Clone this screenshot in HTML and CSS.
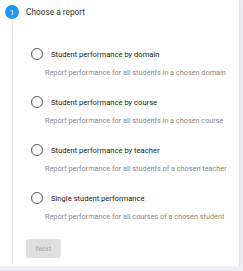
FILE: index.html
```html
<!DOCTYPE html>
<html lang="en">
<head>
    <meta charset="UTF-8">
    <title>Choose a report</title>
    <link rel="stylesheet" href="styles.css">
</head>
<body>

<div class="card">
    <div class="step-head">
        <span class="step-num">1</span>
        <span class="step-title">Choose a report</span>
    </div>
    <div class="step-body">
        <div class="options">
            <div class="option">
                <label class="radio-row"><span class="radio"></span>Student performance by domain</label>
                <p class="hint">Report performance for all students in a chosen domain</p>
            </div>
            <div class="option">
                <label class="radio-row"><span class="radio"></span>Student performance by course</label>
                <p class="hint">Report performance for all students in a chosen course</p>
            </div>
            <div class="option">
                <label class="radio-row"><span class="radio"></span>Student performance by teacher</label>
                <p class="hint">Report performance for all students of a chosen teacher</p>
            </div>
            <div class="option">
                <label class="radio-row"><span class="radio"></span>Single student performance</label>
                <p class="hint">Report performance for all courses of a chosen student</p>
            </div>
        </div>
        <button class="next" disabled>Next</button>
    </div>
</div>

</body>
</html>
```

FILE: styles.css
```css
body {
    margin: 0;
    padding: 0;
    background-color: #eeeef3;
    font-family: Roboto, "Liberation Sans", sans-serif;
}

.card {
    width: 239px;
    height: 266px;
    background-color: white;
    box-shadow: 0 1px 3px rgba(0, 0, 0, 0.15);
    box-sizing: border-box;
    padding: 5px 0 0 5px;
}

.step-head {
    display: flex;
    align-items: center;
    height: 14px;
}

.step-num {
    width: 14px;
    height: 14px;
    border-radius: 50%;
    background-color: #2196f3;
    color: white;
    font-size: 8px;
    display: flex;
    align-items: center;
    justify-content: center;
}

.step-title {
    margin-left: 7px;
    font-size: 8.3px;
    color: #333;
}

.step-body {
    margin: 2px 0 0 7px;
    border-left: 1px solid #e6e6e6;
    padding: 26px 0 0 13px;
    height: 243px;
    box-sizing: border-box;
}

.options {
    margin-left: 5px;
}

.option {
    height: 48px;
}

.radio-row {
    display: flex;
    align-items: center;
    font-size: 7.6px;
    color: #202020;
    height: 14px;
}

.radio {
    width: 12px;
    height: 12px;
    box-sizing: border-box;
    border: 1.2px solid #555;
    border-radius: 50%;
    margin-right: 8px;
}

.hint {
    margin: 7px 0 0 14px;
    font-size: 7.3px;
    color: #888;
    line-height: 10px;
    white-space: nowrap;
}

.next {
    display: block;
    width: 35px;
    height: 19px;
    padding: 0;
    border: none;
    border-radius: 3px;
    background-color: #e0e0e0;
    color: #a6a6a6;
    font-family: inherit;
    font-size: 7.4px;
}
```
